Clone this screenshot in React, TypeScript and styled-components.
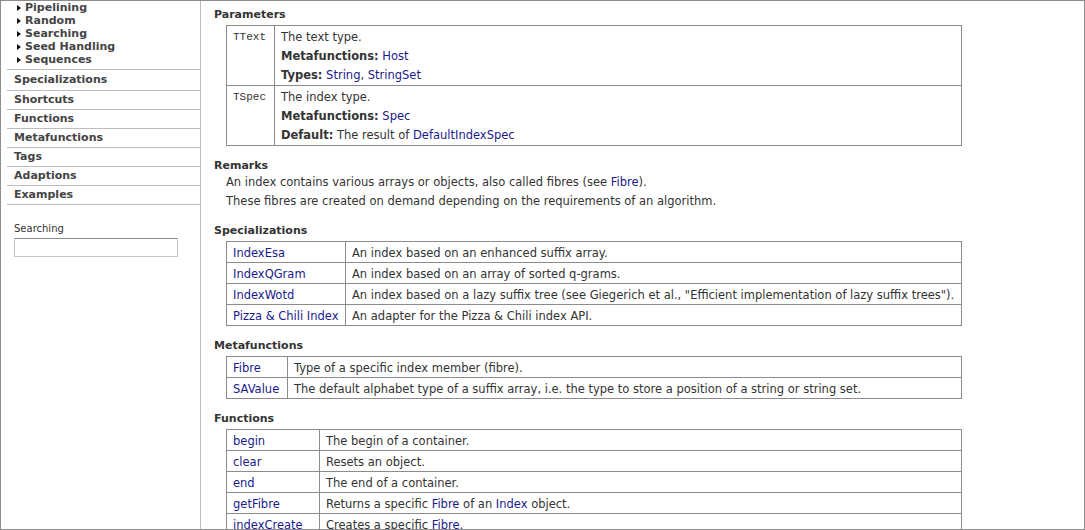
import React from "react";
import styled, { createGlobalStyle } from "styled-components";

const GlobalStyle = createGlobalStyle`
  body {
    margin: 0;
    background: #fff;
  }
`;

const Frame = styled.div`
  width: 1085px;
  height: 530px;
  box-sizing: border-box;
  border: 1px solid #8c8c8c;
  display: flex;
  overflow: hidden;
  background: #fff;
  font-family: "DejaVu Sans", Verdana, sans-serif;
  font-size: 11px;
  color: #333;
`;

const Sidebar = styled.nav`
  width: 200px;
  flex-shrink: 0;
  box-sizing: border-box;
  border-right: 1px solid #bdbdbd;
`;

const SubList = styled.ul`
  list-style: none;
  margin: 0 0 0 6px;
  padding: 0 0 3px 10px;
  border-bottom: 1px solid #bdbdbd;
`;

const SubItem = styled.li`
  display: flex;
  align-items: center;
  height: 13px;
  font-weight: bold;
  color: #444;
`;

const Arrow = styled.span`
  width: 0;
  height: 0;
  border-left: 4px solid #111;
  border-top: 3.5px solid transparent;
  border-bottom: 3.5px solid transparent;
  margin-right: 4px;
`;

const NavItem = styled.div`
  margin-left: 6px;
  padding-left: 7px;
  height: 18px;
  line-height: 18px;
  font-weight: bold;
  color: #444;
  border-bottom: 1px solid #bdbdbd;

  &:first-of-type {
    height: 20px;
    line-height: 20px;
  }
`;

const SearchBox = styled.div`
  padding: 18px 0 0 13px;
`;

const SearchLabel = styled.label`
  display: block;
  font-size: 10px;
  line-height: 12px;
  color: #333;
`;

const SearchInput = styled.input`
  display: block;
  margin-top: 3px;
  width: 164px;
  height: 19px;
  box-sizing: border-box;
  border: 1px solid #c4c4c4;
  border-top-color: #8e8e8e;
  padding: 0 3px;
  outline: none;
`;

const Main = styled.main`
  flex: 1;
  padding: 7px 0 0 13px;
  font-size: 11.5px;
`;

const Heading = styled.h3`
  margin: 13px 0 0;
  font-size: 11px;
  line-height: 14px;
  font-weight: bold;
  color: #333;

  &:first-child {
    margin-top: 0;
  }
`;

const Para = styled.p`
  margin: 0 0 0 12px;
  line-height: 19px;
`;

const ParaBlock = styled.div`
  margin-bottom: 5px;
`;

const Link = styled.a`
  color: #1a1a8c;
  text-decoration: none;
`;

const Strong = styled.b`
  font-weight: bold;
  color: #333;
`;

const Table = styled.table<{ $keyWidth: number }>`
  margin: 3px 0 0 12px;
  width: 736px;
  box-sizing: border-box;
  table-layout: fixed;
  border-collapse: separate;
  border-spacing: 0;
  border-top: 1px solid #8c8c8c;
  border-left: 1px solid #8c8c8c;
  font-size: 11.5px;
  color: #333;

  col:first-child {
    width: ${(p) => p.$keyWidth}px;
  }
`;

const Cell = styled.td<{ $mono?: boolean; $stacked?: boolean }>`
  box-sizing: border-box;
  vertical-align: top;
  padding: 2px 6px 0;
  line-height: ${(p) => (p.$stacked ? "19px" : "18px")};
  border-right: 1px solid #8c8c8c;
  border-bottom: 1px solid #8c8c8c;
  white-space: nowrap;
  font-family: ${(p) => (p.$mono ? '"Liberation Mono", monospace' : "inherit")};
  font-size: ${(p) => (p.$mono ? "11px" : "inherit")};
`;

const Line = styled.div`
  line-height: 19px;
`;

type Entry = { name: string; desc: React.ReactNode };

const EntryTable = ({ keyWidth, rows }: { keyWidth: number; rows: Entry[] }) => (
  <Table $keyWidth={keyWidth}>
    <colgroup>
      <col />
      <col />
    </colgroup>
    <tbody>
      {rows.map((r) => (
        <tr key={r.name}>
          <Cell>
            <Link href="#">{r.name}</Link>
          </Cell>
          <Cell>{r.desc}</Cell>
        </tr>
      ))}
    </tbody>
  </Table>
);

const specializations: Entry[] = [
  { name: "IndexEsa", desc: "An index based on an enhanced suffix array." },
  { name: "IndexQGram", desc: "An index based on an array of sorted q-grams." },
  {
    name: "IndexWotd",
    desc: 'An index based on a lazy suffix tree (see Giegerich et al., "Efficient implementation of lazy suffix trees").',
  },
  { name: "Pizza & Chili Index", desc: "An adapter for the Pizza & Chili index API." },
];

const metafunctions: Entry[] = [
  { name: "Fibre", desc: "Type of a specific index member (fibre)." },
  {
    name: "SAValue",
    desc: "The default alphabet type of a suffix array, i.e. the type to store a position of a string or string set.",
  },
];

const functions: Entry[] = [
  { name: "begin", desc: "The begin of a container." },
  { name: "clear", desc: "Resets an object." },
  { name: "end", desc: "The end of a container." },
  {
    name: "getFibre",
    desc: (
      <>
        Returns a specific <Link href="#">Fibre</Link> of an <Link href="#">Index</Link> object.
      </>
    ),
  },
  {
    name: "indexCreate",
    desc: (
      <>
        Creates a specific <Link href="#">Fibre</Link>.
      </>
    ),
  },
];

const subTopics = ["Pipelining", "Random", "Searching", "Seed Handling", "Sequences"];
const navItems = ["Specializations", "Shortcuts", "Functions", "Metafunctions", "Tags", "Adaptions", "Examples"];

export default function App() {
  return (
    <>
      <GlobalStyle />
      <Frame>
        <Sidebar>
          <SubList>
            {subTopics.map((t) => (
              <SubItem key={t}>
                <Arrow />
                {t}
              </SubItem>
            ))}
          </SubList>
          {navItems.map((n) => (
            <NavItem key={n}>{n}</NavItem>
          ))}
          <SearchBox>
            <SearchLabel>Searching</SearchLabel>
            <SearchInput type="text" />
          </SearchBox>
        </Sidebar>

        <Main>
          <Heading>Parameters</Heading>
          <Table $keyWidth={48}>
            <colgroup>
              <col />
              <col />
            </colgroup>
            <tbody>
              <tr>
                <Cell $mono $stacked>TText</Cell>
                <Cell $stacked>
                  <Line>The text type.</Line>
                  <Line>
                    <Strong>Metafunctions:</Strong> <Link href="#">Host</Link>
                  </Line>
                  <Line>
                    <Strong>Types:</Strong> <Link href="#">String</Link>, <Link href="#">StringSet</Link>
                  </Line>
                </Cell>
              </tr>
              <tr>
                <Cell $mono $stacked>TSpec</Cell>
                <Cell $stacked>
                  <Line>The index type.</Line>
                  <Line>
                    <Strong>Metafunctions:</Strong> <Link href="#">Spec</Link>
                  </Line>
                  <Line>
                    <Strong>Default:</Strong> The result of <Link href="#">DefaultIndexSpec</Link>
                  </Line>
                </Cell>
              </tr>
            </tbody>
          </Table>

          <Heading>Remarks</Heading>
          <ParaBlock>
            <Para>
              An index contains various arrays or objects, also called fibres (see <Link href="#">Fibre</Link>).
            </Para>
            <Para>These fibres are created on demand depending on the requirements of an algorithm.</Para>
          </ParaBlock>

          <Heading>Specializations</Heading>
          <EntryTable keyWidth={119} rows={specializations} />

          <Heading>Metafunctions</Heading>
          <EntryTable keyWidth={61} rows={metafunctions} />

          <Heading>Functions</Heading>
          <EntryTable keyWidth={93} rows={functions} />
        </Main>
      </Frame>
    </>
  );
}
